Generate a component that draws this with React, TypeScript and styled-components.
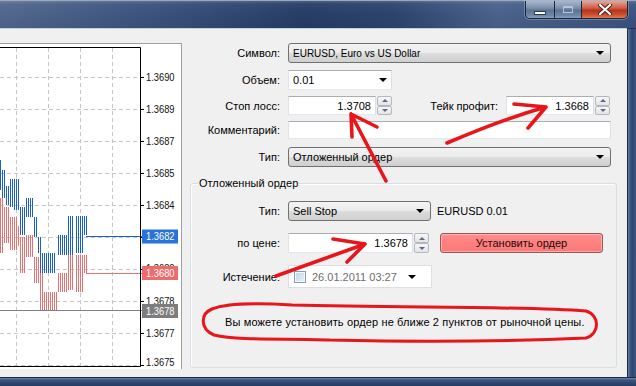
import React from "react";
import styled, { createGlobalStyle } from "styled-components";

const GlobalStyle = createGlobalStyle`
  html, body { margin: 0; padding: 0; background: #f0f0f0; }
  body { font-family: "Liberation Sans", Arial, sans-serif; }
`;

const Window = styled.div`
  position: relative;
  width: 636px;
  height: 386px;
  overflow: hidden;
  display: flex;
  flex-direction: column;
  background: #f0f0f0;
  font-family: "Liberation Sans", Arial, sans-serif;
  font-size: 11px;
  color: #000;
`;

const TitleBar = styled.div`
  height: 29px;
  flex: none;
  box-sizing: border-box;
  display: flex;
  justify-content: flex-end;
  align-items: flex-start;
  padding-right: 8px;
  border-top: 1px solid #9aa7bc;
  border-bottom: 1px solid #26344b;
  background:
    linear-gradient(180deg, rgba(255,255,255,0.18) 0, rgba(255,255,255,0.04) 3px, rgba(255,255,255,0) 14px, rgba(0,0,0,0.06) 100%),
    linear-gradient(90deg, #51678d 0%, #3c547e 22%, #263d66 48%, #2c446d 62%, #4a628b 78%, #3a5380 100%);
`;

const CaptionGroup = styled.div`
  display: flex;
  height: 17px;
  border: 1px solid #1c2636;
  border-top: none;
  border-radius: 0 0 5px 5px;
  overflow: hidden;
  box-shadow: 0 0 0 1px rgba(190, 205, 225, 0.35);
`;

const CaptionButton = styled.div<{ $w: number; $kind: "min" | "max" | "close" }>`
  width: ${(p) => p.$w}px;
  height: 100%;
  display: flex;
  align-items: center;
  justify-content: center;
  box-sizing: border-box;
  border-left: ${(p) => (p.$kind === "min" ? "none" : "1px solid #1c2636")};
  background: ${(p) =>
    p.$kind === "close"
      ? "linear-gradient(180deg, #e6a596 0%, #d0604a 40%, #b8321c 55%, #c9502f 80%, #e07a57 100%)"
      : "linear-gradient(180deg, #a9b8ce 0%, #7a8eac 42%, #5c7292 55%, #6f88aa 85%, #889fc0 100%)"};
`;

const Middle = styled.div`
  flex: 1;
  display: flex;
  min-height: 0;
`;

const Client = styled.div`
  flex: 1;
  display: flex;
  align-items: flex-start;
  padding-top: 14px;
  border-top: 1px solid #c9d0da;
  margin-top: -1px;
`;

const RightFrame = styled.div`
  width: 9px;
  flex: none;
  box-sizing: border-box;
  border-left: 1px solid #1d2a3e;
  background: linear-gradient(90deg, #6f86aa 0, #3d5681 2px, #2f4670 60%, #3c5582 100%);
`;

const BottomFrame = styled.div`
  height: 9px;
  flex: none;
  box-sizing: border-box;
  border-top: 1px solid #1d2a3e;
  background: linear-gradient(180deg, #6f86aa 0, #3d5681 2px, #2f4670 60%, #25395e 100%);
`;

const ChartPanel = styled.div`
  width: 182px;
  height: 326px;
  flex: none;
  box-sizing: border-box;
  background: #fff;
  border-top: 1px solid #a0a0a0;
  border-right: 1px solid #a0a0a0;
  & > svg { display: block; }
`;

const FormArea = styled.div`
  flex: 1;
  display: flex;
  flex-direction: column;
`;

const Row = styled.div<{ $h: number; $mt?: number }>`
  display: flex;
  align-items: center;
  height: ${(p) => p.$h}px;
  margin-top: ${(p) => p.$mt ?? 0}px;
`;

const Label = styled.div<{ $w: number }>`
  width: ${(p) => p.$w}px;
  flex: none;
  text-align: right;
  margin-right: 8px;
  white-space: nowrap;
`;

const Combo = styled.div<{ $w: number; $white?: boolean }>`
  width: ${(p) => p.$w}px;
  height: 100%;
  flex: none;
  box-sizing: border-box;
  display: flex;
  align-items: center;
  justify-content: space-between;
  padding: 0 ${(p) => (p.$white ? 4 : 6)}px 0 4px;
  border: 1px solid ${(p) => (p.$white ? "#abadb3" : "#707070")};
  border-color: ${(p) => (p.$white ? "#abadb3 #dbdfe6 #e3e9ef #e2e3ea" : "#707070")};
  border-radius: ${(p) => (p.$white ? "1px" : "3px")};
  background: ${(p) =>
    p.$white
      ? "#fff"
      : "linear-gradient(180deg, #f3f3f3 0%, #ebebeb 50%, #dddddd 51%, #cfcfcf 100%)"};
  white-space: nowrap;
`;

const ComboText = styled.span<{ $size?: number }>`
  font-size: ${(p) => p.$size ?? 11}px;
`;

const DropArrow = styled.span`
  width: 0;
  height: 0;
  flex: none;
  border-left: 4px solid transparent;
  border-right: 4px solid transparent;
  border-top: 4px solid #000;
`;

const TextBox = styled.div<{ $w: number }>`
  width: ${(p) => p.$w}px;
  height: 100%;
  flex: none;
  box-sizing: border-box;
  border: 1px solid;
  border-color: #abadb3 #dbdfe6 #e3e9ef #e2e3ea;
  background: #fff;
  display: flex;
  align-items: center;
  justify-content: flex-end;
  padding-right: 4px;
`;

const Spinner = styled.div`
  width: 15px;
  height: 100%;
  flex: none;
  margin-left: 1px;
  display: flex;
  flex-direction: column;
`;

const SpinHalf = styled.div`
  flex: 1;
  box-sizing: border-box;
  border: 1px solid #b4b8be;
  border-radius: 2px;
  background: linear-gradient(180deg, #f7f7f7 0%, #e4e4e4 100%);
  display: flex;
  align-items: center;
  justify-content: center;
`;

const SpinArrow = styled.span<{ $down?: boolean }>`
  width: 0;
  height: 0;
  border-left: 3px solid transparent;
  border-right: 3px solid transparent;
  ${(p) => (p.$down ? "border-top: 3px solid #566b8c;" : "border-bottom: 3px solid #566b8c;")}
`;

const Group = styled.fieldset`
  margin: 9px 0 0 8px;
  width: 427px;
  height: 192px;
  box-sizing: border-box;
  padding: 0 7px;
  border: 1px solid #d5dfe5;
  border-radius: 3px;
  box-shadow: inset 1px 1px 0 #fff;
  display: flex;
  flex-direction: column;
`;

const Legend = styled.legend`
  padding: 0 1px;
  line-height: 14px;
  font-size: 11px;
`;

const SideText = styled.span`
  margin-left: 6px;
  white-space: nowrap;
`;

const OrderButton = styled.div`
  margin-left: 11px;
  width: 163px;
  height: 20px;
  box-sizing: border-box;
  border: 1px solid #8a5c5c;
  border-radius: 3px;
  background: linear-gradient(180deg, #ff8c8c 0%, #ff8080 50%, #fb7878 100%);
  box-shadow: inset 0 0 0 1px rgba(255, 200, 200, 0.6);
  display: flex;
  align-items: center;
  justify-content: center;
  color: #1a0a0a;
`;

const DateField = styled.div`
  width: 144px;
  height: 100%;
  box-sizing: border-box;
  border: 1px solid #dcdfe4;
  background: #fff;
  display: flex;
  align-items: center;
  padding: 0 15px 0 5px;
`;

const CheckBox = styled.span`
  width: 12px;
  height: 12px;
  flex: none;
  box-sizing: border-box;
  border: 1px solid #8f9aa8;
  background: linear-gradient(135deg, #bcd6ee 0%, #e6f1fb 100%);
  box-shadow: inset 0 0 0 1px #f4f8fc;
`;

const DateText = styled.span`
  margin-left: 6px;
  width: 86px;
  overflow: hidden;
  white-space: nowrap;
  color: #6d6d6d;
  flex: none;
`;

const DateArrow = styled(DropArrow)`
  margin-left: auto;
`;

const Message = styled.div`
  margin-top: 27px;
  padding-left: 27px;
  line-height: 14px;
  letter-spacing: 0.14px;
  white-space: nowrap;
`;

const Overlay = styled.svg`
  position: absolute;
  left: 0;
  top: 0;
  pointer-events: none;
`;

type Seg = [number, number, number, number];

const RED: Seg[] = [
  [0, 2, 198, 253],
  [4, 8, 207, 243],
  [10, 16, 217, 250],
  [18, 18, 226, 246],
  [20, 24, 237, 273],
  [26, 32, 235, 257],
  [34, 38, 257, 283],
  [40, 42, 273, 293],
  [40, 56, 292, 310],
  [58, 66, 273, 292],
  [68, 72, 255, 290],
  [76, 82, 255, 292],
  [84, 86, 255, 273],
];

const BLUE: Seg[] = [
  [0, 0, 160, 190],
  [2, 4, 170, 198],
  [6, 8, 186, 205],
  [10, 12, 179, 207],
  [14, 18, 179, 210],
  [20, 24, 207, 235],
  [26, 32, 198, 217],
  [34, 36, 217, 237],
  [38, 40, 237, 253],
  [40, 54, 253, 273],
  [58, 66, 235, 255],
  [68, 72, 216, 255],
  [76, 82, 216, 253],
  [84, 86, 216, 235],
];

const GRID_Y = [77, 109, 141, 173, 205, 237, 269, 301, 333, 365];
const GRID_X = [16, 48, 80, 112];
const LABELS: [number, string][] = [
  [77, "1.3690"],
  [109, "1.3689"],
  [141, "1.3687"],
  [173, "1.3685"],
  [205, "1.3684"],
  [301, "1.3678"],
  [333, "1.3677"],
  [362, "1.3675"],
];

function strokes(segs: Seg[]) {
  const out: React.ReactElement[] = [];
  segs.forEach(([x0, x1, y0, y1], i) => {
    for (let x = x0; x <= x1; x += 2) {
      out.push(<line key={`${i}-${x}`} x1={x + 0.5} x2={x + 0.5} y1={y0} y2={y1} />);
    }
  });
  return out;
}

const PriceText = ({ y, t, fill = "#111" }: { y: number; t: string; fill?: string }) => (
  <text x={146} y={y + 4} fontSize={10.6} fill={fill} textLength={28.5} lengthAdjust="spacingAndGlyphs">
    {t}
  </text>
);

const Chart = () => (
  <svg width={181} height={325} viewBox="0 44 181 325" fontFamily="'Liberation Sans', Arial, sans-serif">
    <defs>
      <clipPath id="aboveRed">
        <rect x={140} y={250} width={41} height={16} />
      </clipPath>
    </defs>
    <g stroke="#c6c6c6" strokeWidth={1} strokeDasharray="4 3">
      {GRID_X.map((x) => (
        <line key={`gx${x}`} x1={x + 0.5} x2={x + 0.5} y1={48} y2={366} />
      ))}
      {GRID_Y.map((y) => (
        <line key={`gy${y}`} x1={0} x2={140} y1={y + 0.5} y2={y + 0.5} />
      ))}
    </g>
    <g stroke="#e57373" strokeWidth={1}>{strokes(RED)}</g>
    <g stroke="#1c5fc4" strokeWidth={1}>{strokes(BLUE)}</g>
    <line x1={86} x2={142} y1={236.5} y2={236.5} stroke="#1c5fc4" />
    <line x1={86} x2={142} y1={273.5} y2={273.5} stroke="#e57373" />
    <line x1={0} x2={142} y1={310.5} y2={310.5} stroke="#808080" />
    <g stroke="#000" strokeWidth={1} fill="none">
      <path d="M0 47.5 H140.5 V366.5 H0" />
      {GRID_Y.map((y) => (
        <line key={`t${y}`} x1={140} x2={144} y1={y + 0.5} y2={y + 0.5} />
      ))}
    </g>
    {LABELS.map(([y, t]) => (
      <PriceText key={`l${y}`} y={y} t={t} />
    ))}
    <g clipPath="url(#aboveRed)">
      <PriceText y={268} t="1.3680" />
    </g>
    <rect x={142} y={229.5} width={36} height={14} fill="#2a72db" />
    <PriceText y={236} t="1.3682" fill="#fff" />
    <rect x={142} y={266} width={36} height={14} fill="#ef6b6b" />
    <PriceText y={272.5} t="1.3680" fill="#fff" />
    <rect x={142} y={304} width={36} height={14} fill="#7d7d7d" />
    <PriceText y={310.5} t="1.3678" fill="#fff" />
  </svg>
);

const MinGlyph = () => (
  <svg width={14} height={6} viewBox="0 0 14 6" style={{ marginTop: 6 }}>
    <rect x={1.5} y={1.5} width={11} height={3} fill="#fff" stroke="#2a3850" strokeWidth={1} />
  </svg>
);

const MaxGlyph = () => (
  <svg width={12} height={9} viewBox="0 0 12 9">
    <rect x={1.5} y={1.5} width={9} height={6} fill="none" stroke="#b8c5d6" strokeWidth={1} />
    <line x1={1.5} x2={10.5} y1={2.5} y2={2.5} stroke="#b8c5d6" />
  </svg>
);

const CloseGlyph = () => (
  <svg width={14} height={11} viewBox="0 0 14 11">
    <path d="M2 1 L12 10 M12 1 L2 10" stroke="#4a1a10" strokeWidth={4} strokeLinecap="round" />
    <path d="M2 1 L12 10 M12 1 L2 10" stroke="#fff" strokeWidth={2.2} strokeLinecap="round" />
  </svg>
);

const Spin = () => (
  <Spinner>
    <SpinHalf>
      <SpinArrow />
    </SpinHalf>
    <SpinHalf>
      <SpinArrow $down />
    </SpinHalf>
  </Spinner>
);

const Annotations = () => (
  <Overlay width={636} height={386} viewBox="0 0 636 386">
    <g stroke="#e8151b" strokeWidth={3.6} strokeLinecap="round" strokeLinejoin="round" fill="none">
      <path d="M386 181 L351 114 M351 114 L352 137 M351 114 L377 127" />
      <path d="M447 143 C 475 131, 510 117, 546 107 M546 107 L514 104 M546 107 L528 128" />
      <path d="M276 276 L365 244 M365 244 L333 239 M365 244 L347 262" />
    </g>
    <path
      d="M292 305 C 262 303, 226 303, 212 309 C 200 314, 200 329, 214 335 C 240 341, 290 338, 330 340 C 420 342, 520 341, 586 338 C 600 334, 600 315, 586 311 C 520 306, 400 308, 292 305 Z"
      stroke="#e8151b"
      strokeWidth={3}
      fill="none"
      strokeLinejoin="round"
    />
  </Overlay>
);

export default function App() {
  return (
    <>
      <GlobalStyle />
      <Window>
        <TitleBar>
          <CaptionGroup>
            <CaptionButton $w={28} $kind="min">
              <MinGlyph />
            </CaptionButton>
            <CaptionButton $w={27} $kind="max">
              <MaxGlyph />
            </CaptionButton>
            <CaptionButton $w={46} $kind="close">
              <CloseGlyph />
            </CaptionButton>
          </CaptionGroup>
        </TitleBar>
        <Middle>
          <Client>
            <ChartPanel>
              <Chart />
            </ChartPanel>
            <FormArea>
              <Row $h={20}>
                <Label $w={98}>Символ:</Label>
                <Combo $w={323}>
                  <ComboText $size={10}>EURUSD, Euro vs US Dollar</ComboText>
                  <DropArrow />
                </Combo>
              </Row>
              <Row $h={20} $mt={7}>
                <Label $w={98}>Объем:</Label>
                <Combo $w={104} $white>
                  <ComboText>0.01</ComboText>
                  <DropArrow />
                </Combo>
              </Row>
              <Row $h={19} $mt={6}>
                <Label $w={98}>Стоп лосс:</Label>
                <TextBox $w={88}>1.3708</TextBox>
                <Spin />
                <Label $w={106}>Тейк профит:</Label>
                <TextBox $w={88}>1.3668</TextBox>
                <Spin />
              </Row>
              <Row $h={18} $mt={6}>
                <Label $w={98}>Комментарий:</Label>
                <TextBox $w={323} />
              </Row>
              <Row $h={20} $mt={8}>
                <Label $w={98}>Тип:</Label>
                <Combo $w={323}>
                  <ComboText>Отложенный ордер</ComboText>
                  <DropArrow />
                </Combo>
              </Row>
              <Group>
                <Legend>Отложенный ордер</Legend>
                <Row $h={20} $mt={11}>
                  <Label $w={82}>Тип:</Label>
                  <Combo $w={143}>
                    <ComboText>Sell Stop</ComboText>
                    <DropArrow />
                  </Combo>
                  <SideText>EURUSD 0.01</SideText>
                </Row>
                <Row $h={20} $mt={12}>
                  <Label $w={82}>по цене:</Label>
                  <TextBox $w={125}>1.3678</TextBox>
                  <Spin />
                  <OrderButton>Установить ордер</OrderButton>
                </Row>
                <Row $h={23} $mt={12}>
                  <Label $w={82}>Истечение:</Label>
                  <DateField>
                    <CheckBox />
                    <DateText>26.01.2011 03:27</DateText>
                    <DateArrow />
                  </DateField>
                </Row>
                <Message>Вы можете установить ордер не ближе 2 пунктов от рыночной цены.</Message>
              </Group>
            </FormArea>
          </Client>
          <RightFrame />
        </Middle>
        <BottomFrame />
      </Window>
      <Annotations />
    </>
  );
}
